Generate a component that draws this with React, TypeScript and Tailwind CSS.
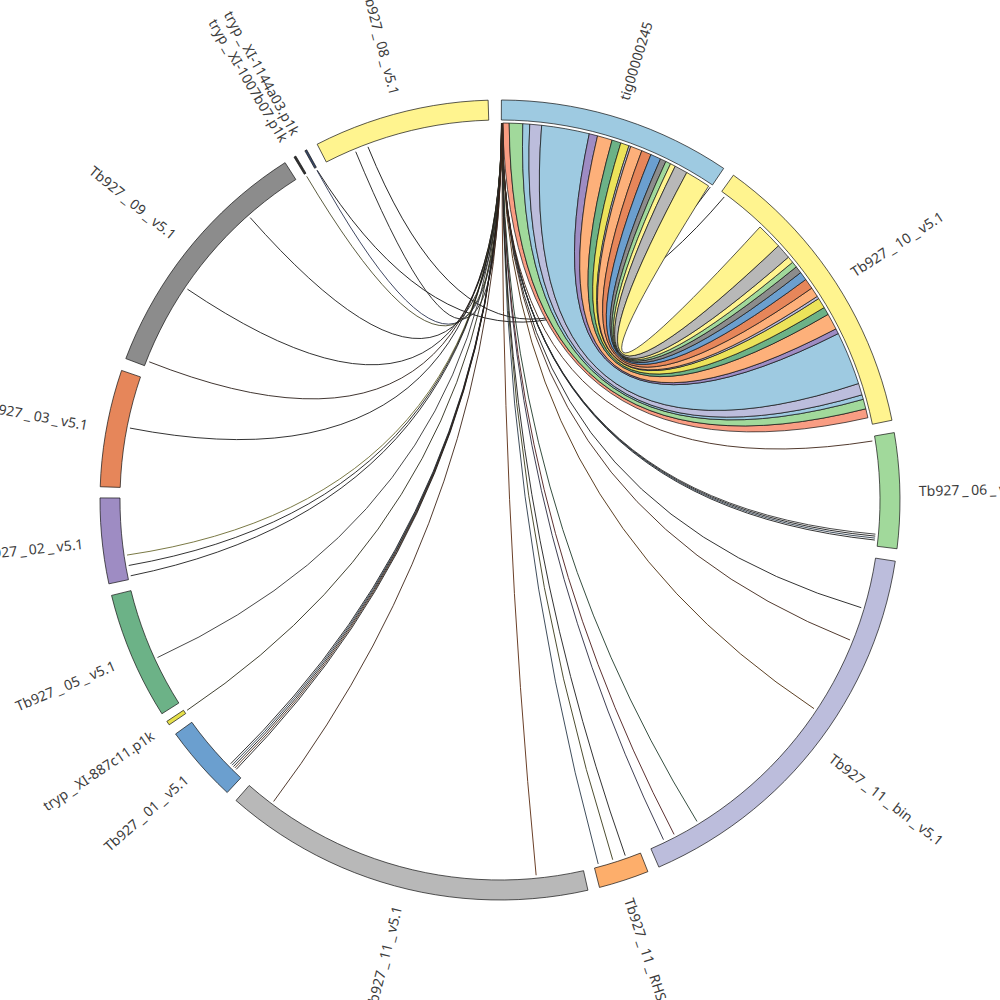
const CX = 500;
const CY = 500;
const R_OUT = 400;
const R_IN = 380;
const R_LINK = 377;
const R_LABEL = 419;
const GAP = 2.8; // extra room either side of "_" in the labels
const RIB_CX = 512; // the ribbons bend a touch to the right of the centre
const RIB_CY = 498;

type Seg = { name: string; a: number; b: number; fill: string };

const SEGS: Seg[] = [
  { name: "tig00000245", a: 0.2, b: 34.0, fill: "#9ecae1" },
  { name: "Tb927_10_v5.1", a: 35.7, b: 78.5, fill: "#fff48f" },
  { name: "Tb927_06_v5.1", a: 80.3, b: 97.0, fill: "#a1d99b" },
  { name: "Tb927_11_bin_v5.1", a: 98.8, b: 156.6, fill: "#bcbddc" },
  { name: "Tb927_11_RHS_v5.1", a: 158.3, b: 165.6, fill: "#fdae6b" },
  { name: "Tb927_11_v5.1", a: 167.3, b: 221.3, fill: "#b8b8b8" },
  { name: "Tb927_01_v5.1", a: 223.0, b: 234.2, fill: "#6b9fcf" },
  { name: "tryp_XI-887c11.p1k", a: 235.8, b: 236.4, fill: "#e6e04a" },
  { name: "Tb927_05_v5.1", a: 237.7, b: 256.2, fill: "#6cb287" },
  { name: "Tb927_02_v5.1", a: 257.9, b: 270.3, fill: "#9e8cc3" },
  { name: "Tb927_03_v5.1", a: 271.9, b: 288.9, fill: "#e6865a" },
  { name: "Tb927_09_v5.1", a: 290.7, b: 327.5, fill: "#8c8c8c" },
  { name: "tryp_XI-1007b07.p1k", a: 329.0, b: 329.3, fill: "#333333" },
  { name: "tryp_XI-1144a03.p1k", a: 330.8, b: 331.1, fill: "#3a4a6a" },
  { name: "Tb927_08_v5.1", a: 332.8, b: 358.3, fill: "#fff48f" },
];

// tig00000245 -> Tb927_10_v5.1 ribbons: [tig from, tig to, tb10 from, tb10 to, colour]
const RIBBONS: [number, number, number, number, string][] = [
  [0.41, 1.4, 76.0, 77.4, "#f99d83"],
  [1.4, 3.47, 74.5, 76.0, "#a1d99b"],
  [3.47, 4.53, 73.8, 74.5, "#9ecae1"],
  [4.53, 6.35, 72.0, 73.8, "#bcbddc"],
  [6.35, 13.7, 63.8, 72.0, "#9ecae1"],
  [13.7, 15.0, 63.0, 63.8, "#9e8cc3"],
  [15.0, 17.3, 60.5, 63.0, "#fdb07a"],
  [17.3, 18.7, 59.3, 60.5, "#6cb287"],
  [18.7, 20.0, 57.7, 59.3, "#ece35a"],
  [20.0, 20.3, 57.3, 57.7, "#bcbddc"],
  [20.3, 22.1, 55.8, 57.3, "#fdb07a"],
  [22.1, 23.6, 54.2, 55.8, "#e6865a"],
  [23.6, 25.2, 52.9, 54.2, "#6b9fcf"],
  [25.2, 26.1, 51.8, 52.9, "#8c8c8c"],
  [26.1, 26.9, 50.9, 51.8, "#a1d99b"],
  [26.9, 27.7, 49.9, 50.9, "#fff48f"],
  [27.7, 29.7, 47.6, 49.9, "#b8b8b8"],
  [29.7, 33.6, 43.6, 47.6, "#fff48f"],
];

// thin links out of the start of tig00000245: [target angle, colour]
const THIN: [number, string][] = [
  [337.5, "#1c1c1c"],
  [330.95, "#2a3350"],
  [329.15, "#4a4a2a"],
  [318.5, "#1c1c1c"],
  [304.0, "#1c1c1c"],
  [291.5, "#2b1f1a"],
  [281.0, "#1c1c1c"],
  [261.6, "#6b6a30"],
  [260.0, "#1c1c1c"],
  [258.4, "#1c1c1c"],
  [245.3, "#333333"],
  [236.1, "#2b2b1a"],
  [225.6, "#1c1c1c"],
  [225.3, "#2a3a4a"],
  [225.0, "#1c1c1c"],
  [224.7, "#4a2a1a"],
  [224.4, "#1c1c1c"],
  [216.9, "#3d2416"],
  [174.5, "#5a2a10"],
  [164.9, "#2a3a4a"],
  [162.6, "#3a3a1a"],
  [160.6, "#1c1c1c"],
  [154.3, "#2a2a40"],
  [152.5, "#4a1a1a"],
  [148.5, "#1f3a2a"],
  [123.6, "#4a2a0a"],
  [111.8, "#3d2416"],
  [106.6, "#1c1c1c"],
  [96.1, "#1c1c1c"],
  [95.8, "#2a3a4a"],
  [95.5, "#1c1c1c"],
  [95.2, "#333333"],
  [81.0, "#3d2416"],
];

// links that cross the bundle: [from, to, control y, colour]
const CROSS: [number, number, number, string][] = [
  [339.5, 33.9, 470, "#111111"],
  [331.0, 36.5, 460, "#111111"],
];

function pt(deg: number, r: number): [number, number] {
  const a = (deg * Math.PI) / 180;
  return [CX + r * Math.sin(a), CY - r * Math.cos(a)];
}

function arc(a1: number, a2: number, r: number): string {
  const n = Math.max(1, Math.ceil(Math.abs(a2 - a1) / 2));
  const parts: string[] = [];
  for (let i = 0; i <= n; i++) {
    const [x, y] = pt(a1 + ((a2 - a1) * i) / n, r);
    parts.push(`${x.toFixed(2)} ${y.toFixed(2)}`);
  }
  return parts.join(" L ");
}

function segPath(s: Seg) {
  return `M ${arc(s.a, s.b, R_OUT)} L ${arc(s.b, s.a, R_IN)} Z`;
}

function ribbonPath(s1: number, e1: number, s2: number, e2: number) {
  const [bx, by] = pt(s2, R_LINK);
  const [ax, ay] = pt(s1, R_LINK);
  return `M ${arc(s1, e1, R_LINK)} Q ${RIB_CX} ${RIB_CY} ${bx.toFixed(2)} ${by.toFixed(2)} L ${arc(
    s2,
    e2,
    R_LINK
  )} Q ${RIB_CX} ${RIB_CY} ${ax.toFixed(2)} ${ay.toFixed(2)} Z`;
}

function linePath(a: number, b: number, cy = CY) {
  const [x1, y1] = pt(a, R_LINK);
  const [x2, y2] = pt(b, R_LINK);
  return `M ${x1.toFixed(2)} ${y1.toFixed(2)} Q ${CX} ${cy} ${x2.toFixed(2)} ${y2.toFixed(2)}`;
}

function Label({ s }: { s: Seg }) {
  const m = (s.a + s.b) / 2;
  const [x, y] = pt(m, R_LABEL);
  const right = m < 180;
  const rot = right ? m - 90 : m + 90;
  const parts = s.name.split("_");
  return (
    <text
      x={x}
      y={y}
      transform={`rotate(${rot.toFixed(2)} ${x.toFixed(2)} ${y.toFixed(2)})`}
      textAnchor={right ? "start" : "end"}
      dominantBaseline="central"
      fill="#3c3c3c"
    >
      <tspan>{parts[0]}</tspan>
      {parts.slice(1).map((p, i) => (
        <tspan key={i}>
          <tspan dx={GAP}>_</tspan>
          <tspan dx={GAP}>{p}</tspan>
        </tspan>
      ))}
    </text>
  );
}

export default function App() {
  return (
    <div className="w-[1000px] h-[1000px] overflow-hidden bg-white">
      <svg
        width={1000}
        height={1000}
        viewBox="0 0 1000 1000"
        className="block font-['Noto_Sans',sans-serif] text-[14px]"
      >
        {CROSS.map(([a, b, cy, c], i) => (
          <path key={`x${i}`} d={linePath(a, b, cy)} fill="none" stroke={c} strokeWidth={0.9} />
        ))}
        {RIBBONS.map(([s1, e1, s2, e2, c], i) => (
          <path
            key={`r${i}`}
            d={ribbonPath(s1, e1, s2, e2)}
            fill={c}
            stroke="#111"
            strokeWidth={0.7}
            strokeLinejoin="round"
          />
        ))}
        {THIN.map(([t, c], i) => (
          <path
            key={`t${i}`}
            d={linePath(0.22 + i * 0.006, t)}
            fill="none"
            stroke={c}
            strokeWidth={0.9}
          />
        ))}
        {SEGS.map((s) => (
          <path key={s.name} d={segPath(s)} fill={s.fill} stroke="#111" strokeWidth={0.7} />
        ))}
        {SEGS.map((s) => (
          <Label key={`l${s.name}`} s={s} />
        ))}
      </svg>
    </div>
  );
}
